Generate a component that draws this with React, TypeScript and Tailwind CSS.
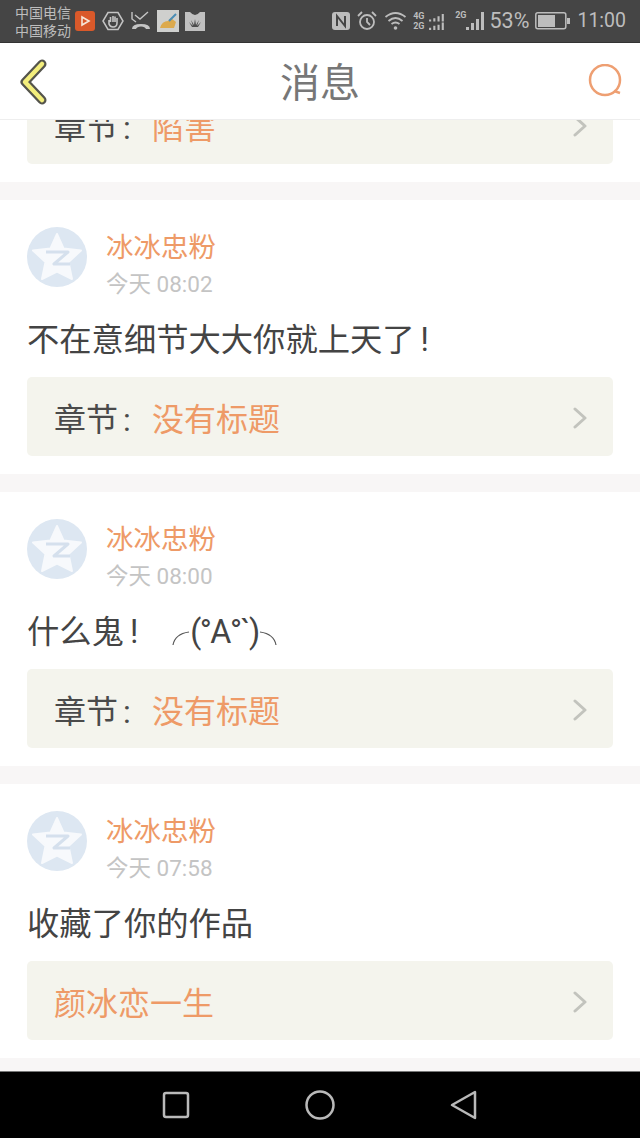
import React from "react";

const font = { fontFamily: 'Roboto, "Noto Sans CJK SC", "Noto Sans", sans-serif' };

function Avatar() {
  return (
    <svg width="60" height="60" viewBox="0 0 60 60" className="shrink-0">
      <circle cx="30" cy="30" r="30" fill="#dde7f2" />
      <path
        d="M30 7 L36.500 21.500 L54 23.500 L41.500 35 L45 52 L30 44.500 L15 52 L18.500 35 L6 23.500 L23.500 21.500 Z"
        fill="#f7f9fc"
        stroke="#f7f9fc"
        strokeWidth="2"
        strokeLinejoin="round"
      />
      <path d="M19 25 H41 L27 37 H43" fill="none" stroke="#d5e0ed" strokeWidth="3" strokeLinejoin="round" />
    </svg>
  );
}

function Chevron() {
  return (
    <svg width="14" height="22" viewBox="0 0 14 22" className="mt-[2px] shrink-0">
      <path d="M2 2 L12 11 L2 20" fill="none" stroke="#c2c3bd" strokeWidth="3" strokeLinecap="round" strokeLinejoin="round" />
    </svg>
  );
}

function ChapterBox({ label, title }: { label?: string; title: string }) {
  return (
    <div className="mx-[27px] flex h-[79px] items-center justify-between rounded-[5px] bg-[#f4f4ed] pl-[27px] pr-[26px]">
      <div className="flex items-center pt-[6px] text-[32px] leading-none">
        {label && (
          <span className="w-[98px] text-[#4a4a4a]">
            {label}
            <span className="ml-[5px]">:</span>
          </span>
        )}
        <span className="text-[#ee9a67]">{title}</span>
      </div>
      <Chevron />
    </div>
  );
}

function Card({ time, children, label, title }: { time: string; children: React.ReactNode; label?: string; title: string }) {
  return (
    <section className="h-[274px] bg-white pt-[27px]">
      <div className="flex h-[60px] gap-[19px] pl-[27px]">
        <Avatar />
        <div className="flex flex-col">
          <div className="mt-[1px] h-[40px] text-[27.500px] leading-[40px] text-[#ee9a67]">冰冰忠粉</div>
          <div className="text-[22.500px] leading-[32px] text-[#c4c4c4]">{time}</div>
        </div>
      </div>
      <div className="mt-[31px] flex h-[44px] items-center pl-[27px] text-[32.300px] leading-none text-[#444444]">{children}</div>
      <div className="mt-[15px]">
        <ChapterBox label={label} title={title} />
      </div>
    </section>
  );
}

function StatusBar() {
  return (
    <div className="flex h-[43px] shrink-0 items-center justify-between border-b-[1px] border-[#333] bg-[#454545] pl-[15px] pr-[14px] text-[#bdbdbd]">
      <div className="flex items-center">
        <div className="mt-[2px] flex w-[59px] flex-col text-[14px] leading-[18px]">
          <span>中国电信</span>
          <span>中国移动</span>
        </div>
        <svg width="20" height="20" viewBox="0 0 20 20" className="ml-[1px]">
          <rect width="20" height="20" rx="3" fill="#d9592a" />
          <path d="M7 6 L14 10 L7 14 Z" fill="none" stroke="#f6e6d8" strokeWidth="1.6" />
        </svg>
        <svg width="22" height="20" viewBox="0 0 22 20" className="ml-[7px]">
          <path d="M6 1.5 H16 L21 10 L16 18.5 H6 L1 10 Z" fill="none" stroke="#c4c4c4" strokeWidth="1.5" />
          <path d="M7 9 V13 Q8 16 11 16 Q15 16 15 12 V7 M11 5 V11 M8.500 6 V11 M13 5.500 V11" fill="none" stroke="#c4c4c4" strokeWidth="1.6" />
        </svg>
        <svg width="20" height="20" viewBox="0 0 20 20" className="ml-[7px]">
          <path d="M1 1 L1 8 L5 11 M4 4 L9 8 L17 1" fill="none" stroke="#c4c4c4" strokeWidth="1.4" />
          <path d="M1 18 Q1 13 10 13 Q19 13 19 18 L15 18 Q14 15.500 10 15.500 Q6 15.500 5 18 Z" fill="#c4c4c4" />
        </svg>
        <svg width="22" height="22" viewBox="0 0 22 22" className="ml-[6px]">
          <rect width="22" height="22" fill="#cfd0ce" />
          <path d="M3 18 Q5 11 11 11 L14 8 L19 12 L17 18 Z" fill="#dcaa4e" />
          <path d="M12 11 L19 4" stroke="#4a8cb4" strokeWidth="2" />
        </svg>
        <svg width="20" height="20" viewBox="0 0 20 20" className="ml-[6px]">
          <path d="M0 1 H5 Q10 7 15 1 H20 V20 H0 Z" fill="#c0c0c0" />
          <path d="M10 8 L9 14 L6 9 L8 15 L4 11 L7 16 H13 L16 11 L12 15 L14 9 L11 14 Z" fill="#4c4c4c" />
        </svg>
      </div>
      <div className="flex items-center">
        <svg width="20" height="20" viewBox="0 0 20 20">
          <rect x="1" y="1" width="18" height="18" rx="3" fill="#bdbdbd" />
          <path d="M6 15 V5 L14 15 V5" fill="none" stroke="#454545" strokeWidth="2" />
        </svg>
        <svg width="20" height="20" viewBox="0 0 20 20" className="ml-[6px]">
          <circle cx="10" cy="11" r="7" fill="none" stroke="#bdbdbd" strokeWidth="1.8" />
          <path d="M10 7 V11 L13 14 M1 5 L5 1 M15 1 L19 5" fill="none" stroke="#bdbdbd" strokeWidth="1.8" />
        </svg>
        <svg width="23" height="18" viewBox="0 0 22 18" className="ml-[7px]">
          <path d="M1 5 Q11 -3 21 5 M4 9 Q11 3 18 9 M7 12 Q11 9 15 12" fill="none" stroke="#bdbdbd" strokeWidth="1.8" />
          <circle cx="11" cy="16" r="1.800" fill="#bdbdbd" />
        </svg>
        <div className="ml-[6px] flex w-[15px] flex-col text-[9px] font-bold leading-[10px]">
          <span>4G</span>
          <span>2G</span>
        </div>
        <svg width="19" height="19" viewBox="0 0 18 18">
          <path d="M1 7h2v2H1zM5 6h2v3H5zM9 4h2v5H9zM13 2h2v7h-2zM1 15h2v2H1zM5 13h2v4H5zM9 12h2v5H9zM13 10h2v7h-2z" fill="#bdbdbd" />
        </svg>
        <div className="ml-[8px] -mt-[11px] text-[9px] font-bold leading-none">2G</div>
        <svg width="22" height="20" viewBox="0 0 22 20" className="-ml-[2px]">
          <path d="M1 16h3v3H1zM6 12h3v7H6zM11 8h3v11h-3zM16 1h3v18h-3z" fill="#bdbdbd" />
        </svg>
        <span className="ml-[3px] text-[21.500px] leading-none">53%</span>
        <svg width="36" height="18" viewBox="0 0 36 18" className="ml-[6px]">
          <rect x="0.800" y="0.800" width="30" height="16" rx="2" fill="none" stroke="#bdbdbd" strokeWidth="1.500" />
          <rect x="3" y="3" width="17" height="12" fill="#bdbdbd" />
          <rect x="32" y="6" width="3" height="6" fill="#bdbdbd" />
        </svg>
        <span className="ml-[6px] text-[19.500px] leading-none">11:00</span>
      </div>
    </div>
  );
}

function Header() {
  return (
    <header className="relative z-10 flex h-[77px] shrink-0 items-center justify-between border-b border-[#eeeeee] bg-white pl-[18px] pr-[17px]">
      <svg width="36" height="48" viewBox="0 0 36 48" className="mt-[1px]">
        <path d="M24 6 L7 24 L24 42" fill="none" stroke="#55554c" strokeWidth="9" strokeLinecap="round" strokeLinejoin="round" />
        <path d="M24 6 L7 24 L24 42" fill="none" stroke="#f3ee7c" strokeWidth="4.500" strokeLinecap="round" strokeLinejoin="round" />
      </svg>
      <h1 className="mt-[5px] -ml-[1px] text-[40px] font-normal leading-none text-[#777777]">消息</h1>
      <svg width="36" height="34" viewBox="0 0 36 34">
        <circle cx="18" cy="16" r="15" fill="none" stroke="#ee9f72" strokeWidth="2.500" />
        <path d="M27 27 L33 29" stroke="#ee9f72" strokeWidth="2.500" />
      </svg>
    </header>
  );
}

function NavBar() {
  return (
    <nav className="flex h-[67px] shrink-0 items-center border-t border-[#777] bg-black">
      <div className="flex w-full items-center justify-center gap-[115px]">
        <svg width="28" height="28" viewBox="0 0 28 28">
          <rect x="2" y="2" width="24" height="24" rx="2" fill="none" stroke="#b9b9b9" strokeWidth="2.500" />
        </svg>
        <svg width="30" height="30" viewBox="0 0 30 30">
          <circle cx="15" cy="15" r="13.500" fill="none" stroke="#b9b9b9" strokeWidth="2.500" />
        </svg>
        <svg width="28" height="30" viewBox="0 0 28 30">
          <path d="M2 15 L25 2 V28 Z" fill="none" stroke="#b9b9b9" strokeWidth="2.500" strokeLinejoin="round" />
        </svg>
      </div>
    </nav>
  );
}

export default function App() {
  return (
    <div className="flex h-[1138px] w-[640px] flex-col overflow-hidden bg-[#f8f6f6]" style={font}>
      <StatusBar />
      <Header />
      <main className="flex-1 overflow-hidden">
        <div className="-mt-[35px] bg-white pb-[18px]">
          <ChapterBox label="章节" title="陷害" />
        </div>
        <div className="mt-[18px] flex flex-col gap-[18px]">
          <Card time="今天 08:02" label="章节" title="没有标题">
            不在意细节大大你就上天了<span className="ml-[6px]">!</span>
          </Card>
          <Card time="今天 08:00" label="章节" title="没有标题">
            <span>什么鬼<span className="ml-[6px]">!</span></span>
            <span className="ml-[34px] flex items-center tracking-[-1.500px]">
              <svg width="18" height="22" viewBox="0 0 18 22" className="mt-[8px]"><path d="M1 20 Q3 9 17 7" fill="none" stroke="#555" strokeWidth="1.200" /></svg>
              (°A°`)
              <svg width="18" height="22" viewBox="0 0 18 22" className="mt-[8px]"><path d="M1 7 Q15 9 17 20" fill="none" stroke="#555" strokeWidth="1.200" /></svg>
            </span>
          </Card>
          <Card time="今天 07:58" title="颜冰恋一生">
            收藏了你的作品
          </Card>
        </div>
      </main>
      <NavBar />
    </div>
  );
}
